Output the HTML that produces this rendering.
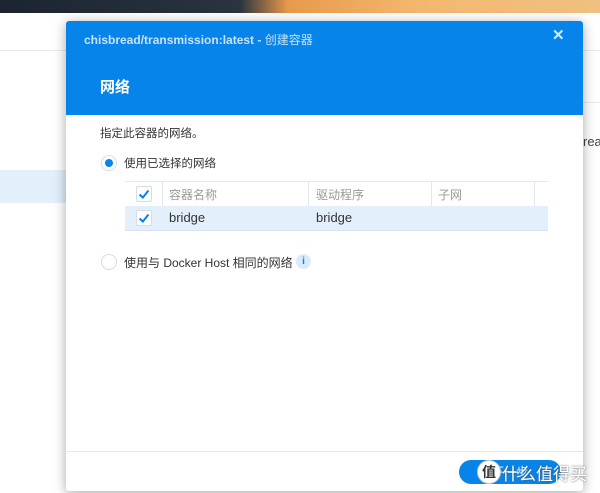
<html><head><style>
body{margin:0;width:600px;height:493px;position:relative;overflow:hidden;background:#fff;font-family:"Liberation Sans","Noto Sans CJK SC",sans-serif;}
.a{position:absolute}
</style></head><body>
<div class="a" style="left:0;top:0;width:600px;height:13px;background:linear-gradient(90deg,#1b2430 0%,#2a3440 40%,#e89a4a 48%,#f3b870 70%,#f0c080 100%)"></div>
<div class="a" style="left:0;top:50px;width:600px;height:1px;background:#e6eaee"></div>
<div class="a" style="left:0;top:170px;width:66px;height:33px;background:#e3effa"></div>
<div class="a" style="left:583px;top:102px;width:17px;height:1px;background:#e6eaee"></div>
<div class="a" style="left:583px;top:134px;font-size:13px;color:#444">read/</div>
<div class="a" style="left:66px;top:21px;width:517px;height:470px;background:#fff;box-shadow:0 2px 12px rgba(0,0,0,.35);border-radius:3px;overflow:hidden">
 <div class="a" style="left:0;top:0;width:517px;height:94px;background:#0784ea"></div>
 <div class="a" style="left:18px;top:10px;font-size:12px;color:#c6e2fb;font-weight:bold">chisbread/transmission:latest - <span style="font-weight:normal">创建容器</span></div>
 <div class="a" style="left:486px;top:5px;font-size:15px;color:#d6ebfc;font-weight:bold">✕</div>
 <div class="a" style="left:34px;top:55px;font-size:15px;color:#fff;font-weight:bold">网络</div>
 <div class="a" style="left:34px;top:104px;font-size:11.5px;color:#333">指定此容器的网络。</div>
 <div class="a" style="left:35px;top:134px;width:14px;height:14px;border:1px solid #d5dce4;border-radius:50%;background:#fff"></div>
 <div class="a" style="left:39px;top:138px;width:8px;height:8px;border-radius:50%;background:#0784ea"></div>
 <div class="a" style="left:58px;top:134px;font-size:11.5px;color:#333">使用已选择的网络</div>
 <div class="a" style="left:59px;top:160px;width:423px;height:1px;background:#e3e8ee"></div>
 <div class="a" style="left:59px;top:185px;width:423px;height:24px;background:#e3effa;border-bottom:1px solid #d5e3f0"></div>
 <div class="a" style="left:96px;top:161px;width:1px;height:24px;background:#e3e8ee"></div>
 <div class="a" style="left:242px;top:161px;width:1px;height:24px;background:#e3e8ee"></div>
 <div class="a" style="left:365px;top:161px;width:1px;height:24px;background:#e3e8ee"></div>
 <div class="a" style="left:468px;top:161px;width:1px;height:24px;background:#e3e8ee"></div>
 <div class="a" style="left:70px;top:165px;width:14px;height:14px;border:1px solid #d5dce4;border-radius:2px;background:#fff"><svg width="14" height="14"><path d="M2.5 7.5 L5.8 10.5 L11.5 3.5" fill="none" stroke="#0784ea" stroke-width="2"/></svg></div>
 <div class="a" style="left:70px;top:189px;width:14px;height:14px;border:1px solid #d5dce4;border-radius:2px;background:#fff"><svg width="14" height="14"><path d="M2.5 7.5 L5.8 10.5 L11.5 3.5" fill="none" stroke="#0784ea" stroke-width="2"/></svg></div>
 <div class="a" style="left:103px;top:165px;font-size:12px;color:#999">容器名称</div>
 <div class="a" style="left:250px;top:165px;font-size:12px;color:#999">驱动程序</div>
 <div class="a" style="left:372px;top:165px;font-size:12px;color:#999">子网</div>
 <div class="a" style="left:103px;top:189px;font-size:13px;color:#333">bridge</div>
 <div class="a" style="left:250px;top:189px;font-size:13px;color:#333">bridge</div>
 <div class="a" style="left:35px;top:233px;width:14px;height:14px;border:1px solid #d5dce4;border-radius:50%;background:#fff"></div>
 <div class="a" style="left:58px;top:233px;font-size:12px;color:#333">使用与 Docker Host 相同的网络</div>
 <div class="a" style="left:230px;top:233px;width:15px;height:15px;border-radius:50%;background:#dbeafa;color:#0784ea;font-size:10px;line-height:15px;text-align:center;font-weight:bold">i</div>
 <div class="a" style="left:0;top:430px;width:517px;height:1px;background:#e6eaee"></div>
 <div class="a" style="left:393px;top:439px;width:102px;height:24px;border-radius:12px;background:#0784ea;color:#fff;font-size:12px;line-height:24px;text-align:center">下一步</div>
</div>
<div class="a" style="left:477px;top:460px;width:22px;height:22px;border-radius:50%;background:#fff;border:1px solid #ccc;color:#333;font-size:14px;line-height:22px;text-align:center;font-weight:bold">值</div>
<div class="a" style="left:502px;top:460px;font-size:17px;color:#fff;text-shadow:0 0 2px #555">什么值得买</div>
</body></html>
